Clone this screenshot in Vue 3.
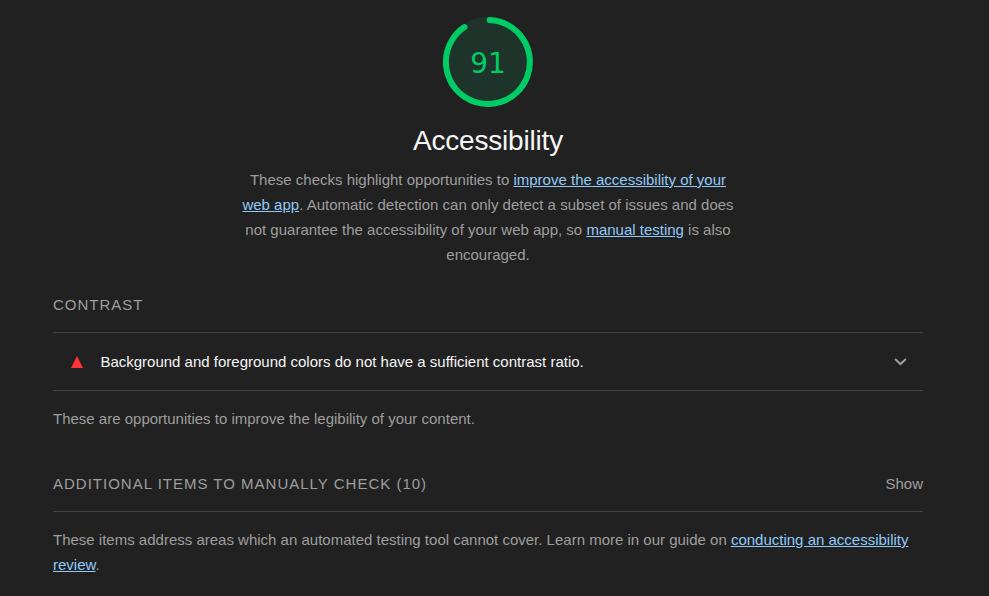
<script setup>
const score = 91
const manualCount = 10
</script>

<template>
  <main class="report">
    <header class="category">
      <svg class="gauge" viewBox="0 0 90 90" role="img" aria-label="Accessibility score">
        <circle class="gauge-base" cx="45" cy="45" r="45" />
        <path class="gauge-arc" d="M46.7 3.03A42 42 0 1 1 21.5 10.1" />
        <text class="gauge-score" x="45" y="56">{{ score }}</text>
      </svg>
      <h1>Accessibility</h1>
      <p class="summary">
        These checks highlight opportunities to <a href="#">improve the accessibility of your web app</a>. Automatic detection can only detect a subset of issues and does not guarantee the accessibility of your web app, so <a href="#">manual testing</a> is also encouraged.
      </p>
    </header>

    <section class="contrast">
      <h2>Contrast</h2>
      <div class="audit">
        <svg class="fail" viewBox="0 0 12 12"><path d="M6 0L12 12H0Z" /></svg>
        <span class="audit-title">Background and foreground colors do not have a sufficient contrast ratio.</span>
        <svg class="chevron" viewBox="0 0 14 10"><path d="M2.1 2.1L7.5 7.1L12.9 2.1" /></svg>
      </div>
      <p class="note">These are opportunities to improve the legibility of your content.</p>
    </section>

    <section class="manual">
      <div class="manual-head">
        <h2>Additional items to manually check ({{ manualCount }})</h2>
        <span class="toggle">Show</span>
      </div>
      <p class="note">
        These items address areas which an automated testing tool cannot cover. Learn more in our guide on <a href="#">conducting an accessibility review</a>.
      </p>
    </section>
  </main>
</template>

<style>
body {
  background: #212121;
}
</style>

<style scoped>
.report {
  box-sizing: border-box;
  width: 976px;
  height: 596px;
  padding: 17px 53px 0;
  overflow: hidden;
  background: #212121;
  color: #9e9e9e;
  font: 15px/25px "Liberation Sans", Arial, sans-serif;
}
.category {
  display: flex;
  flex-direction: column;
  align-items: center;
}
.gauge {
  width: 90px;
  height: 90px;
}
.gauge-base {
  fill: #1e3329;
}
.gauge-arc {
  fill: none;
  stroke: #00cc66;
  stroke-width: 6;
  stroke-linecap: round;
}
.gauge-score {
  fill: #00cc66;
  font: 28px "DejaVu Sans", sans-serif;
  text-anchor: middle;
}
h1 {
  margin: 16px 0 8px;
  color: #f5f5f5;
  font-size: 28px;
  font-weight: 400;
  line-height: 36px;
  letter-spacing: -0.2px;
}
p {
  margin: 0;
}
.summary {
  width: 500px;
  text-align: center;
}
a {
  color: #90caf9;
  text-decoration: underline;
}
h2 {
  margin: 0;
  font-size: 15px;
  font-weight: 400;
  line-height: 25px;
  letter-spacing: 1px;
  text-transform: uppercase;
}
.contrast {
  padding-top: 25px;
}
.audit {
  display: flex;
  align-items: center;
  height: 57px;
  margin-top: 15px;
  padding: 0 16px 0 18px;
  border-top: 1px solid #424242;
  border-bottom: 1px solid #424242;
}
.fail {
  width: 12px;
  height: 12px;
  fill: #ff3333;
}
.audit-title {
  flex: 1;
  margin-left: 17.4px;
  color: #f5f5f5;
}
.chevron {
  width: 14px;
  height: 10px;
  fill: none;
  stroke: #9e9e9e;
  stroke-width: 2;
}
.contrast .note {
  padding-top: 15px;
}
.manual {
  padding-top: 40px;
}
.manual-head {
  display: flex;
  justify-content: space-between;
  padding-bottom: 15px;
  border-bottom: 1px solid #424242;
}
.manual .note {
  padding-top: 15px;
}
</style>
